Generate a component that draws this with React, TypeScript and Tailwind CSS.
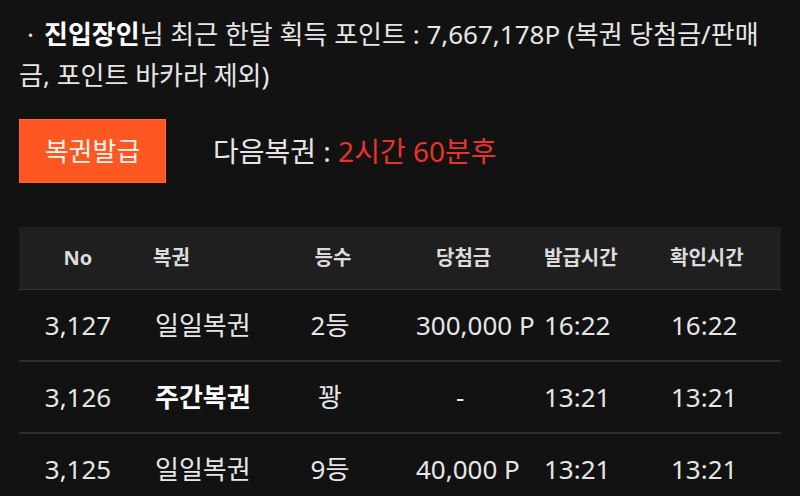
import React from "react";

type Row = {
  no: string;
  name: string;
  weekly?: boolean;
  rank: string;
  prize: string | null;
  issued: string;
  checked: string;
};

const rows: Row[] = [
  { no: "3,127", name: "일일복권", rank: "2등", prize: "300,000 P", issued: "16:22", checked: "16:22" },
  { no: "3,126", name: "주간복권", weekly: true, rank: "꽝", prize: null, issued: "13:21", checked: "13:21" },
  { no: "3,125", name: "일일복권", rank: "9등", prize: "40,000 P", issued: "13:21", checked: "13:21" },
];

const cols = "grid grid-cols-[118px_153px_86px_160px_126px_119px]";

export default function App() {
  return (
    <div
      className="h-[496px] w-[800px] overflow-hidden bg-[#121212] text-[#e6e6e6]"
      style={{ fontFamily: '"Noto Sans", "Noto Sans CJK KR", sans-serif' }}
    >
      <div className="px-[19px] pt-[14px]">
        <p className="text-[26px] leading-[41px]">
          <span className="ml-[8px] mr-[10px]">·</span>
          <b className="font-bold text-white">진입장인</b>님 최근 한달 획득 포인트 : 7,667,178P (복권 당첨금/판매금,
          포인트 바카라 제외)
        </p>

        <div className="mt-[23px] flex items-center gap-[47px]">
          <button
            type="button"
            className="h-[64px] w-[147px] border border-[#ff6a3d] bg-[#ff5722] text-[26px] text-[#fff3ee]"
          >
            복권발급
          </button>
          <p className="text-[28px]">
            다음복권 : <span className="text-[#e8332a]">2시간 60분후</span>
          </p>
        </div>

        <div className="mt-[44px]">
          <div className={`${cols} h-[63px] items-center border-b border-[#333] bg-[#1f1f1f] text-[20px] font-bold text-[#dcdcdc]`}>
            <div className="text-center">No</div>
            <div className="pl-[16px]">복권</div>
            <div className="text-center">등수</div>
            <div className="pl-[60px]">당첨금</div>
            <div className="pl-[8px]">발급시간</div>
            <div className="pl-[8px]">확인시간</div>
          </div>
          {rows.map((r) => (
            <div
              key={r.no}
              className={`${cols} h-[72px] items-center border-b-2 border-[#2e2e2e] text-[26px] text-[#e6e6e6]`}
            >
              <div className="text-center">{r.no}</div>
              <div className={`pl-[18px] ${r.weekly ? "font-bold text-white" : ""}`}>{r.name}</div>
              <div className="pr-[6px] text-center">{r.rank}</div>
              <div className={r.prize ? "pl-[40px]" : "pl-[80px]"}>{r.prize ?? "-"}</div>
              <div className="pl-[8px]">{r.issued}</div>
              <div className="pl-[9px]">{r.checked}</div>
            </div>
          ))}
        </div>
      </div>
    </div>
  );
}
